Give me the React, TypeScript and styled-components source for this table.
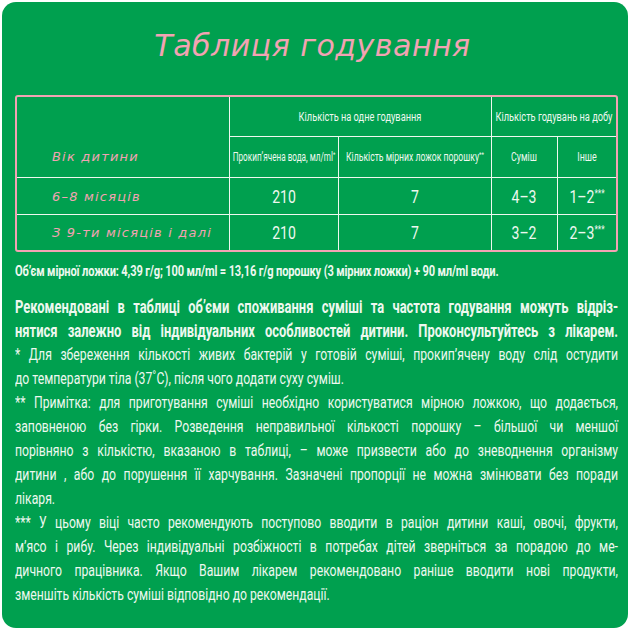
import React from 'react';
import styled, { createGlobalStyle } from 'styled-components';

const GREEN = '#00a04f';
const PINK = '#f2a3b3';
const INK = '#eef8ef';
const NARROW = `"Roboto", "Liberation Sans", sans-serif`;
const HAND = `"DejaVu Sans", "Noto Sans", sans-serif`;
const S = 0.74;

const Global = createGlobalStyle`
  html, body { margin: 0; padding: 0; background: #ffffff; }
  body { width: 630px; height: 630px; overflow: hidden; }
`;

const Card = styled.div`
  box-sizing: border-box;
  margin: 2px;
  width: 626px;
  height: 626px;
  background: ${GREEN};
  border-radius: 14px;
  padding: 0 10px 0 13px;
  display: flex;
  flex-direction: column;
  color: ${INK};
  font-family: ${NARROW};
`;

const Title = styled.h1`
  margin: 24px 0 0;
  padding-right: 8px;
  height: 40px;
  line-height: 40px;
  text-align: center;
  font-family: ${HAND};
  font-style: italic;
  font-weight: normal;
  font-size: 30px;
  letter-spacing: 0.5px;
  color: ${PINK};
`;

const TableFrame = styled.div`
  margin-top: 29px;
  width: 603px;
  border: 2px solid ${PINK};
  border-radius: 3px;
  box-sizing: border-box;
`;

const Table = styled.table`
  width: 100%;
  border-collapse: collapse;
  table-layout: fixed;
  td {
    border: 1.5px solid ${INK};
    padding: 0;
    text-align: center;
    vertical-align: middle;
    white-space: nowrap;
  }
  tr:first-child td { border-top: none; }
  tr:last-child td { border-bottom: none; }
  td:first-child { border-left: none; }
  td:last-child { border-right: none; }
`;

const Squeeze = styled.span<{ $s?: number }>`
  display: block;
  width: max-content;
  margin-left: 50%;
  transform: translateX(-50%) scaleX(${(p) => p.$s ?? 0.74});
`;

const Head = styled.td<{ $h: number }>`
  height: ${(p) => p.$h}px;
  font-size: 12px;
  sup { font-size: 8px; vertical-align: 4px; }
`;

const Age = styled.td<{ $h: number; $bottom?: boolean }>`
  height: ${(p) => p.$h}px;
  && {
    text-align: left;
    padding-left: 35px;
    vertical-align: ${(p) => (p.$bottom ? 'bottom' : 'middle')};
    padding-bottom: ${(p) => (p.$bottom ? 13 : 0)}px;
  }
  font-family: ${HAND};
  font-style: italic;
  font-size: 13px;
  letter-spacing: 1.2px;
  color: ${PINK};
`;

const Num = styled.td`
  font-size: 18px;
  sup { font-size: 10px; vertical-align: 6px; }
`;

const Condensed = styled.div`
  width: ${603 / S}px;
  transform: scaleX(${S});
  transform-origin: left top;
`;

const Spoon = styled.div`
  margin-top: 12px;
  height: 14px;
  line-height: 14px;
  font-size: 15px;
  font-weight: bold;
  letter-spacing: -0.2px;
`;

const Notes = styled.div`
  margin-top: 17px;
`;

const Line = styled.div<{ $bold?: boolean; $last?: boolean }>`
  height: 24px;
  line-height: 24px;
  font-size: ${(p) => (p.$bold ? 17.5 : 16.5)}px;
  font-weight: ${(p) => (p.$bold ? 'bold' : 'normal')};
  white-space: nowrap;
  text-align: justify;
  text-align-last: ${(p) => (p.$last ? 'left' : 'justify')};
`;

const rows = [
  { age: '6–8 місяців', water: '210', spoons: '7', mix: '4–3', other: '1–2', h: 36 },
  { age: 'З 9-ти місяців і далі', water: '210', spoons: '7', mix: '3–2', other: '2–3', h: 35 },
];

const bold = [
  'Рекомендовані в таблиці об’єми споживання суміші та частота годування можуть відріз-',
  'нятися залежно від індивідуальних особливостей дитини. Проконсультуйтесь з лікарем.',
];

const notes: { text: string; last?: boolean }[] = [
  { text: '* Для збереження кількості живих бактерій у готовій суміші, прокип’ячену воду слід остудити' },
  { text: 'до температури тіла (37˚C), після чого додати суху суміш.', last: true },
  { text: '** Примітка: для приготування  суміші необхідно користуватися мірною ложкою, що додається,' },
  { text: 'заповненою без гірки. Розведення неправильної кількості порошку – більшої чи меншої' },
  { text: 'порівняно з кількістю, вказаною в таблиці, – може призвести або до зневоднення організму' },
  { text: 'дитини , або до порушення її харчування. Зазначені пропорції не можна змінювати без поради' },
  { text: 'лікаря.', last: true },
  { text: '*** У цьому віці часто рекомендують поступово вводити в раціон дитини каші, овочі, фрукти,' },
  { text: 'м’ясо і рибу. Через індивідуальні розбіжності в потребах дітей зверніться за порадою до ме-' },
  { text: 'дичного працівника. Якщо Вашим лікарем рекомендовано раніше вводити нові продукти,' },
  { text: 'зменшіть кількість суміші відповідно до рекомендації.', last: true },
];

export default function App() {
  return (
    <>
      <Global />
      <Card>
        <Title>Таблиця годування</Title>
        <TableFrame>
          <Table>
            <colgroup>
              <col style={{ width: 212 }} />
              <col style={{ width: 109 }} />
              <col style={{ width: 153 }} />
              <col style={{ width: 66 }} />
              <col />
            </colgroup>
            <tbody>
              <tr>
                <Age rowSpan={2} $h={66} $bottom>
                  Вік дитини
                </Age>
                <Head $h={39} colSpan={2}>
                  <Squeeze $s={0.77}>Кількість на одне годування</Squeeze>
                </Head>
                <Head $h={39} colSpan={2}>
                  <Squeeze $s={0.77}>Кількість годувань на добу</Squeeze>
                </Head>
              </tr>
              <tr>
                <Head $h={40}>
                  <Squeeze $s={0.68}>
                    Прокип’ячена вода, мл/ml<sup>*</sup>
                  </Squeeze>
                </Head>
                <Head $h={40}>
                  <Squeeze $s={0.72}>
                    Кількість мірних ложок порошку<sup>**</sup>
                  </Squeeze>
                </Head>
                <Head $h={40}>
                  <Squeeze>Суміш</Squeeze>
                </Head>
                <Head $h={40}>
                  <Squeeze>Інше</Squeeze>
                </Head>
              </tr>
              {rows.map((r) => (
                <tr key={r.age}>
                  <Age $h={r.h}>{r.age}</Age>
                  <Num>
                    <Squeeze $s={0.78}>{r.water}</Squeeze>
                  </Num>
                  <Num>
                    <Squeeze $s={0.78}>{r.spoons}</Squeeze>
                  </Num>
                  <Num>
                    <Squeeze $s={0.78}>{r.mix}</Squeeze>
                  </Num>
                  <Num>
                    <Squeeze $s={0.78}>
                      {r.other}
                      <sup>***</sup>
                    </Squeeze>
                  </Num>
                </tr>
              ))}
            </tbody>
          </Table>
        </TableFrame>
        <Condensed>
          <Spoon>Об’єм мірної ложки: 4,39 г/g; 100 мл/ml = 13,16 г/g порошку (3 мірних ложки) + 90 мл/ml води.</Spoon>
          <Notes>
            {bold.map((t) => (
              <Line key={t} $bold>
                {t}
              </Line>
            ))}
            {notes.map((n) => (
              <Line key={n.text} $last={n.last}>
                {n.text}
              </Line>
            ))}
          </Notes>
        </Condensed>
      </Card>
    </>
  );
}
